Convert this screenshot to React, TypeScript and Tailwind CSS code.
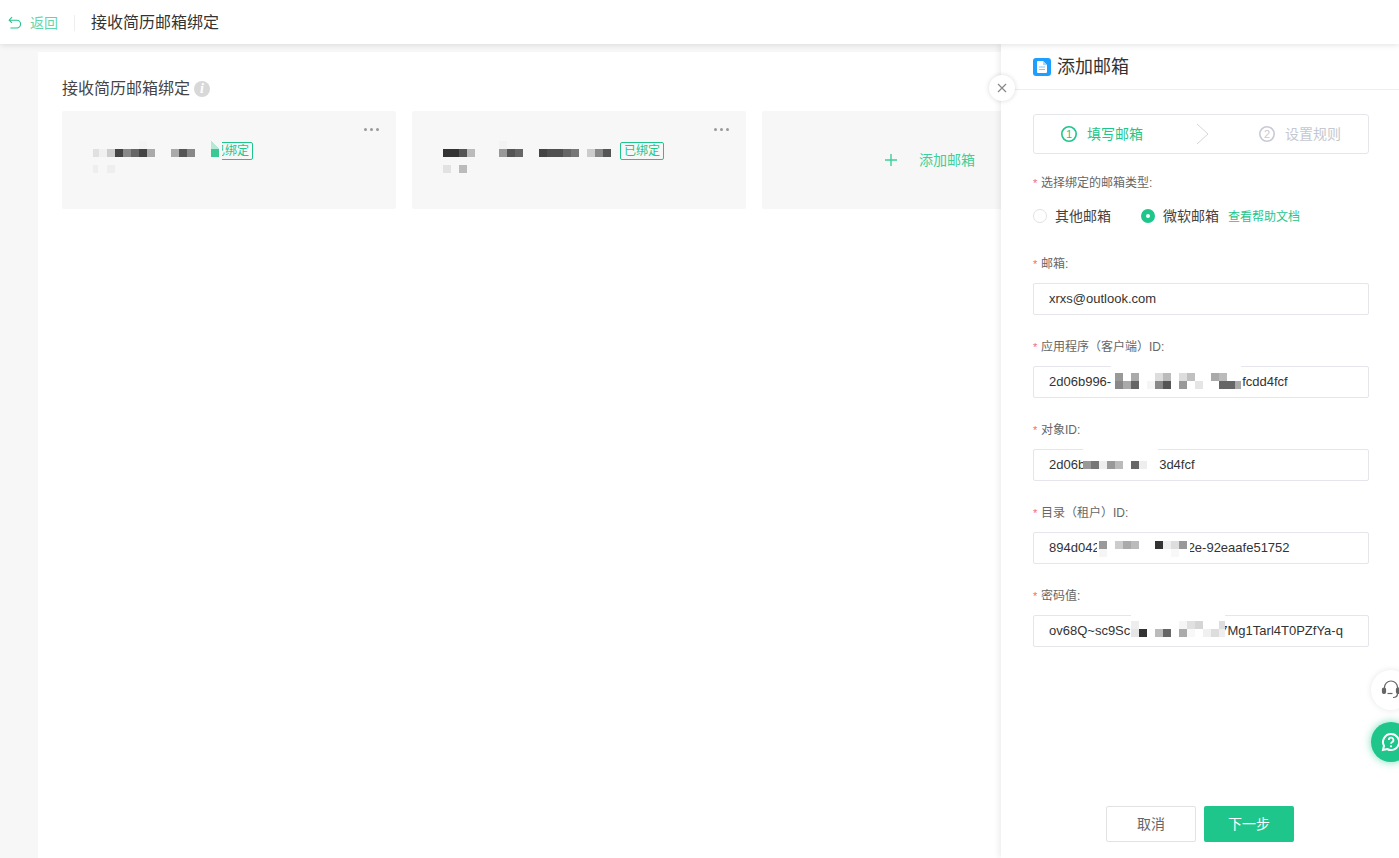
import type { ReactNode } from 'react'

type Cell = [number, number, number, string]

// x, y are page pixels, so the cells can be read straight off the screenshot
function Mosaic({ box, cells, patch, className }: { box: [number, number, number, number]; cells: Cell[]; patch?: string; className?: string }) {
  const [x, y, w, h] = box
  return (
    <svg width={w} height={h} viewBox={`${x} ${y} ${w} ${h}`} shapeRendering="crispEdges" className={className}>
      {patch && <rect x={x} y={y} width={w} height={h} fill={patch} />}
      {cells.map(([cx, cy, cw, fill], i) => <rect key={i} x={cx} y={cy} width={cw} height={8} fill={fill} />)}
    </svg>
  )
}

function Dots() {
  return (
    <div className="absolute right-[17px] top-[17px] flex gap-[3px]">
      <span className="w-[3px] h-[3px] rounded-full bg-[#999999]" />
      <span className="w-[3px] h-[3px] rounded-full bg-[#999999]" />
      <span className="w-[3px] h-[3px] rounded-full bg-[#999999]" />
    </div>
  )
}

function BoundTag() {
  return (
    <span className="w-[44px] h-[18px] mt-px shrink-0 flex items-center justify-center border border-[#1ec68b] rounded-[2px] text-xs leading-none text-[#1ec68b]">已绑定</span>
  )
}

function StepNumber({ n, color }: { n: string; color: string }) {
  return (
    <svg width="16" height="16" viewBox="0 0 16 16" fill="none" className="shrink-0">
      <circle cx="8" cy="8" r="7.200" stroke={color} strokeWidth="1.600" />
      <text x="8" y="12" textAnchor="middle" fontSize="11" fill={color} stroke="none">{n}</text>
    </svg>
  )
}

function Label({ children }: { children: ReactNode }) {
  return (
    <div className="h-5 pt-[2px] flex items-center text-xs text-[#666666]">
      <span className="w-2 text-[#f56c6c] text-[11px]">*</span>
      {children}
    </div>
  )
}

function Field({ label, before, after, gap, children }: { label: string; before: string; after?: string; gap?: string; children?: ReactNode }) {
  return (
    <div className="mb-[21px]">
      <Label>{label}</Label>
      <div className="relative mt-[10px]">
        <div className="h-8 flex items-center border border-[#e4e6eb] rounded-[2px] pl-[15px] text-[13px] text-[#333333] overflow-hidden whitespace-nowrap">
          <span>{before}</span>
          {after && <span className={gap}>{after}</span>}
        </div>
        {children}
      </div>
    </div>
  )
}

const card1: Cell[] = [
  [93, 149, 6, '#e0e0e0'], [99, 149, 8, '#f0f0f0'], [107, 149, 8, '#cccccc'], [115, 149, 8, '#444444'],
  [123, 149, 8, '#888888'], [131, 149, 8, '#666666'], [139, 149, 8, '#444444'], [147, 149, 8, '#aaaaaa'],
  [139, 141, 8, '#f4f4f4'], [171, 149, 8, '#aaaaaa'], [179, 149, 8, '#555555'], [187, 149, 8, '#888888'],
  [93, 165, 5, '#eeeeee'], [107, 165, 8, '#eeeeee'],
]

const card2: Cell[] = [
  [443, 149, 16, '#333333'], [459, 149, 8, '#555555'], [467, 149, 8, '#bbbbbb'],
  [499, 141, 8, '#f3f3f3'], [499, 149, 8, '#999999'], [507, 149, 8, '#555555'], [515, 149, 8, '#666666'],
  [539, 149, 8, '#444444'], [547, 149, 16, '#505050'], [563, 149, 8, '#666666'], [571, 149, 8, '#777777'],
  [587, 149, 8, '#cccccc'], [595, 149, 8, '#888888'], [603, 149, 8, '#555555'],
  [443, 165, 8, '#e2e2e2'], [459, 165, 8, '#bbbbbb'],
]

const clientId: Cell[] = [
  [1115, 373, 8, '#999999'], [1131, 373, 8, '#aaaaaa'], [1155, 373, 8, '#dddddd'], [1163, 373, 8, '#bbbbbb'],
  [1179, 373, 8, '#dddddd'], [1187, 373, 8, '#c0c0c0'], [1211, 373, 8, '#aaaaaa'], [1219, 373, 8, '#bbbbbb'],
  [1115, 381, 8, '#888888'], [1123, 381, 8, '#aaaaaa'], [1131, 381, 8, '#666666'], [1147, 381, 8, '#f5f5f5'],
  [1155, 381, 8, '#888888'], [1163, 381, 8, '#555555'], [1179, 381, 8, '#999999'], [1195, 381, 8, '#e5e5e5'],
  [1219, 381, 16, '#666666'], [1235, 381, 6, '#aaaaaa'],
]

const objectId: Cell[] = [
  [1083, 461, 8, '#999999'], [1091, 461, 8, '#777777'], [1099, 461, 8, '#eeeeee'], [1107, 461, 8, '#999999'],
  [1115, 461, 8, '#bbbbbb'], [1131, 461, 8, '#666666'], [1139, 461, 8, '#eeeeee'],
]

const tenantId: Cell[] = [
  [1099, 541, 8, '#999999'], [1115, 541, 8, '#cccccc'], [1123, 541, 8, '#aaaaaa'], [1131, 541, 8, '#bbbbbb'],
  [1155, 541, 8, '#333333'], [1163, 541, 8, '#eeeeee'], [1171, 541, 8, '#dddddd'], [1179, 541, 8, '#999999'],
  [1099, 549, 8, '#f5f5f5'], [1171, 549, 8, '#f8f8f8'],
]

const secret: Cell[] = [
  [1131, 621, 8, '#eeeeee'], [1179, 621, 8, '#f5f5f5'], [1187, 621, 8, '#e0e0e0'], [1195, 621, 8, '#d5d5d5'], [1219, 621, 6, '#dddddd'],
  [1131, 629, 8, '#e5e5e5'], [1139, 629, 8, '#333333'], [1155, 629, 8, '#bbbbbb'], [1163, 629, 8, '#666666'],
  [1179, 629, 8, '#aaaaaa'], [1187, 629, 8, '#f8f8f8'], [1203, 629, 8, '#f0f0f0'], [1211, 629, 8, '#dddddd'], [1219, 629, 6, '#eeeeee'],
]

export default function App() {
  return (
    <div className="relative h-screen w-full overflow-hidden flex flex-col bg-[#f7f7f7] font-['Liberation_Sans','Noto_Sans_CJK_SC',sans-serif]">
      <header className="relative z-20 h-11 shrink-0 pt-px flex items-center bg-white shadow-[0_1px_6px_rgba(0,0,0,0.12)]">
        <svg width="14" height="14" viewBox="0 0 14 14" fill="none" stroke="#1ec68b" strokeWidth="1.1" className="ml-[8px]">
          <path d="M1.5 4.2h7.2a3.9 3.9 0 0 1 0 7.8H2.4" />
          <path d="M4 1.2 1.2 4.2 4 6.8" />
        </svg>
        <span className="ml-2 text-sm text-[#5fd6ac]">返回</span>
        <span className="ml-4 w-px h-4 bg-[#eeeeee]" />
        <span className="ml-4 text-base text-[#333333]">接收简历邮箱绑定</span>
      </header>

      <main className="flex-1 min-h-0 pl-[38px] pt-2">
        <div className="h-full bg-white pl-6 pt-[27px]">
          <div className="flex items-center h-5 text-base text-[#444444]">
            接收简历邮箱绑定
            <span className="ml-1 w-4 h-4 rounded-full bg-[#d8d8d8] flex items-center justify-center text-sm italic font-bold font-['Liberation_Serif',serif] text-white">i</span>
          </div>
          <div className="flex gap-4 mt-3">
            <div className="relative w-[334px] h-[98px] shrink-0 rounded-[2px] bg-[#f7f7f7] pl-[31px] pt-[30px] flex items-start">
              <Dots />
              <Mosaic box={[93, 141, 116, 32]} cells={card1} />
              <div className="relative flex">
                <BoundTag />
                <svg width="14" height="20" viewBox="0 0 14 20" shapeRendering="crispEdges" className="absolute left-0 top-0">
                  <rect x="0" y="0" width="13" height="20" fill="#f7f7f7" />
                  <polygon points="2,0 10,8 2,8" fill="#b5e8d5" />
                  <rect x="2" y="8" width="8" height="8" fill="#3cc797" />
                </svg>
              </div>
            </div>
            <div className="relative w-[334px] h-[98px] shrink-0 rounded-[2px] bg-[#f7f7f7] pl-[31px] pt-[30px] flex items-start">
              <Dots />
              <Mosaic box={[443, 141, 177, 32]} cells={card2} />
              <BoundTag />
            </div>
            <div className="w-[334px] h-[98px] shrink-0 rounded-[2px] bg-[#f7f7f7] pl-[2px] flex items-center justify-center">
              <svg width="12" height="12" viewBox="0 0 12 12" stroke="#3ecf9a" strokeWidth="1.4">
                <path d="M6 0v12M0 6h12" />
              </svg>
              <span className="ml-[22px] text-sm text-[#3ecf9a]">添加邮箱</span>
            </div>
          </div>
        </div>
      </main>

      <aside className="absolute z-10 left-[1001px] right-0 top-11 bottom-0 flex flex-col bg-white pl-8 pr-[30px] shadow-[-2px_0_6px_rgba(0,0,0,0.08)]">
        <button className="absolute -left-3 top-[31px] w-[26px] h-[26px] rounded-full bg-white shadow-[0_0_5px_rgba(0,0,0,0.15)] flex items-center justify-center">
          <svg width="10" height="10" viewBox="0 0 10 10" stroke="#888888" strokeWidth="1.2">
            <path d="M1 1l8 8M9 1l-8 8" />
          </svg>
        </button>

        <div className="-ml-8 -mr-[30px] pl-8 h-[46px] shrink-0 flex items-center border-b border-[#eeeeee]">
          <span className="w-[18px] h-[18px] rounded-[3px] bg-[#1d9fff] flex items-center justify-center">
            <svg width="10" height="12" viewBox="0 0 10 12">
              <path d="M0 1a1 1 0 0 1 1-1h5l4 4v7a1 1 0 0 1-1 1H1a1 1 0 0 1-1-1z" fill="#ffffff" />
              <path d="M6 0v4h4z" fill="#a6dbff" />
              <path d="M2 6h6M2 8.500h6" stroke="#7cc8ff" strokeWidth="1" />
            </svg>
          </span>
          <span className="ml-[6px] text-lg text-[#333333]">添加邮箱</span>
        </div>

        <div className="mt-6 h-10 shrink-0 flex items-center border border-[#e4e6eb] rounded-[3px] pl-[27px]">
          <StepNumber n="1" color="#1ec68b" />
          <span className="ml-[10px] text-sm text-[#1ec68b]">填写邮箱</span>
          <svg width="14" height="22" viewBox="0 0 14 22" fill="none" stroke="#d5d7dd" className="ml-[53px]">
            <path d="M1 1l11 10L1 21" />
          </svg>
          <span className="ml-[49px] flex"><StepNumber n="2" color="#c8cad4" /></span>
          <span className="ml-[10px] text-sm text-[#c5c8d0]">设置规则</span>
        </div>

        <div className="mt-[18px]">
          <Label>选择绑定的邮箱类型:</Label>
        </div>
        <div className="mt-[14px] mb-[27px] h-5 flex items-center">
          <span className="w-[14px] h-[14px] rounded-full border border-[#dfe1e6]" />
          <span className="ml-2 text-sm text-[#444444]">其他邮箱</span>
          <span className="ml-[30px] w-[14px] h-[14px] rounded-full bg-[#1ec68b] flex items-center justify-center">
            <span className="w-1 h-1 rounded-full bg-white" />
          </span>
          <span className="ml-2 text-sm text-[#444444]">微软邮箱</span>
          <span className="ml-[9px] pt-[2px] text-xs text-[#1ec68b]">查看帮助文档</span>
        </div>

        <Field label="邮箱:" before="xrxs@outlook.com" />
        <Field label="应用程序（客户端）ID:" before="2d06b996-" after="fcdd4fcf" gap="ml-[131px]">
          <Mosaic box={[1111, 366, 130, 24]} cells={clientId} patch="#ffffff" className="absolute left-[78px] top-0" />
        </Field>
        <Field label="对象ID:" before="2d06b" after="3d4fcf" gap="ml-[74px]">
          <Mosaic box={[1083, 449, 75, 22]} cells={objectId} patch="#ffffff" className="absolute left-[50px] top-0" />
        </Field>
        <Field label="目录（租户）ID:" before="894d042" after="2e-92eaafe51752" gap="ml-[88px]">
          <Mosaic box={[1097, 538, 93, 22]} cells={tenantId} patch="#ffffff" className="absolute left-16 top-[6px]" />
        </Field>
        <Field label="密码值:" before="ov68Q~sc9Sc" after="7Mg1Tarl4T0PZfYa-q" gap="ml-[90px]">
          <Mosaic box={[1131, 615, 94, 30]} cells={secret} patch="#ffffff" className="absolute left-[98px] top-0" />
        </Field>

        <div className="mt-auto pb-4 flex justify-center gap-2 -translate-x-px">
          <button className="w-[90px] h-9 rounded-[2px] border border-[#e2e2e2] bg-white text-sm text-[#666666]">取消</button>
          <button className="w-[90px] h-9 rounded-[2px] bg-[#1ec68b] text-sm text-white">下一步</button>
        </div>
      </aside>

      <div className="absolute z-30 left-[1371px] top-[670px] w-10 h-10 rounded-full bg-white shadow-[0_0_6px_rgba(0,0,0,0.1)] flex items-center justify-center">
        <svg width="20" height="20" viewBox="0 0 20 20" fill="none" stroke="#666666" strokeWidth="1.2">
          <path d="M3.500 9V7.500a6.500 6.500 0 0 1 13 0V9" />
          <rect x="1.500" y="8" width="3" height="5.500" rx="1.400" fill="#666666" />
          <rect x="15.500" y="8" width="3" height="5.500" rx="1.400" fill="#666666" />
          <path d="M16.500 13.500c0 2.500-2 4-4.500 4" />
          <path d="M6.500 13.500h5" />
        </svg>
      </div>
      <div className="absolute z-30 left-[1371px] top-[722px] w-10 h-10 rounded-full bg-[#1ec68b] shadow-[0_0_8px_rgba(30,198,139,0.6)] flex items-center justify-center">
        <svg width="20" height="20" viewBox="0 0 20 20" fill="none" stroke="#ffffff" strokeWidth="2">
          <path d="M10 2a8 8 0 1 1-3.800 15L2 18l1-4.200A8 8 0 0 1 10 2z" />
          <path d="M7.800 8a2.300 2.300 0 1 1 3.400 2c-.8.500-1.200.900-1.200 1.800" strokeWidth="1.800" />
          <circle cx="10" cy="14.300" r="1.100" fill="#ffffff" stroke="none" />
        </svg>
      </div>
    </div>
  )
}
